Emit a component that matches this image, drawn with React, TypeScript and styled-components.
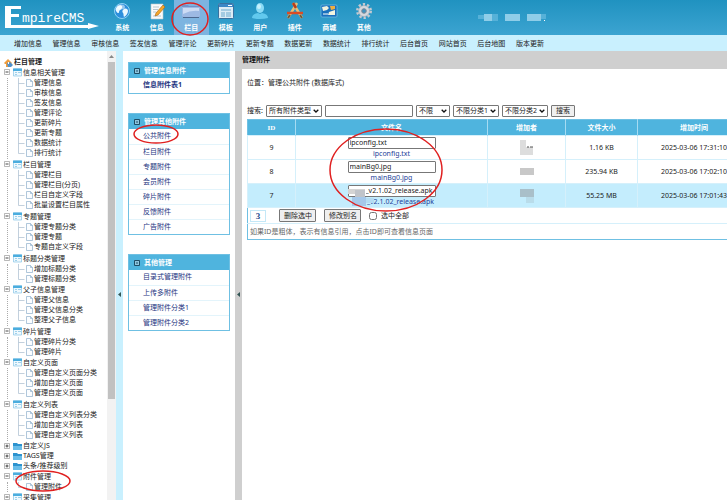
import React from "react";
import styled, { createGlobalStyle } from "styled-components";

const GlobalStyle = createGlobalStyle`
  *, *::before, *::after { box-sizing: border-box; }
  html, body, #root { height: 100%; margin: 0; }
  body {
    overflow: hidden;
    background: #fff;
    color: #222;
    font: 7px/10px "Noto Sans", "Noto Sans CJK SC", sans-serif;
  }
  ul { list-style: none; margin: 0; padding: 0; }
  a { color: inherit; text-decoration: none; }
  button, input, select { font: inherit; color: inherit; margin: 0; }
`;

const Page = styled.div`
  position: relative;
  display: flex;
  flex-direction: column;
  height: 100vh;
  overflow: hidden;
`;

/* ---------- header ---------- */

const Header = styled.header`
  display: flex;
  flex: none;
  height: 35px;
  background: linear-gradient(#2092c0, #3ca4d1);
`;

const LogoBox = styled.div`
  flex: none;
  width: 105px;
`;

const MainNav = styled.nav`
  display: flex;
  flex: none;
  width: 276px;
`;

const MainLink = styled.a<{ $active?: boolean }>`
  display: flex;
  flex: 1;
  flex-direction: column;
  align-items: center;
  gap: 3px;
  padding-top: 2px;
  color: #fff;
  font-weight: 700;
  background: ${(p) => (p.$active ? "#7db4e0" : "transparent")};
`;

const UserInfo = styled.div`
  padding: 13px 0 0 97px;
  svg { display: block; }
`;

const SubNav = styled.nav`
  flex: none;
  height: 16px;
  padding: 4px 14px 0;
  background: #c9f0fe;
`;

const SubList = styled.ul`
  display: flex;
  justify-content: space-between;
  max-width: 530px;
  white-space: nowrap;
`;

/* ---------- body columns ---------- */

const Body = styled.div`
  display: flex;
  flex: 1;
  min-height: 0;
`;

const TreePane = styled.aside`
  flex: none;
  width: 107px;
  overflow: hidden;
  padding-top: 6px;
  white-space: nowrap;
`;

const ScrollTrack = styled.div`
  display: flex;
  flex: none;
  flex-direction: column;
  align-items: center;
  width: 9px;
  background: #f2f2f2;
`;

const ScrollArrow = styled.svg`
  flex: none;
  width: 5px;
  height: 11px;
`;

const ScrollThumb = styled.div`
  width: 7px;
  height: 75%;
  background: #c1c1c1;
`;

const Splitter = styled.button<{ $tone: string }>`
  display: flex;
  flex: none;
  align-items: center;
  justify-content: center;
  width: 7px;
  padding: 38px 0 0;
  border: 0;
  background: ${(p) => p.$tone};
`;

/* ---------- tree ---------- */

const TreeTitle = styled.div`
  display: flex;
  align-items: center;
  gap: 1px;
  height: 10px;
  padding-left: 4px;
  font-weight: 700;
`;

const Folder = styled.div<{ $closed?: boolean }>`
  display: flex;
  align-items: center;
  height: ${(p) => (p.$closed ? 10 : 11)}px;
  padding-left: 4px;
`;

const Toggle = styled.button`
  display: flex;
  width: 7px;
  height: 7px;
  margin-right: 2px;
  padding: 0;
  border: 0;
  background: #fff;
`;

const Leaves = styled.ul<{ $long: boolean }>`
  margin-left: 7px;
  padding: 0 0 ${(p) => (p.$long ? 1 : 0)}px 10px;
  border-left: 1px dotted #aaa;
`;

const Leaf = styled.a`
  display: flex;
  align-items: center;
  height: 10px;
`;

/* ---------- side menu ---------- */

const MenuPane = styled.aside`
  display: flex;
  flex: none;
  flex-direction: column;
  gap: 19px;
  width: 112px;
  padding: 11px 5px 0;
`;

const MenuBox = styled.section`
  border: 1px solid #6fc0e3;
  color: #1c3380;
`;

const MenuTitle = styled.h2`
  display: flex;
  align-items: center;
  gap: 4px;
  height: 15px;
  margin: 0;
  padding-left: 5px;
  background: #4fb4de;
  color: #fff;
  font-size: 7px;
`;

const MenuItem = styled.a<{ $bold?: boolean }>`
  display: block;
  height: 15px;
  padding: 2px 0 0 14px;
  font-weight: ${(p) => (p.$bold ? 700 : 400)};
  li + li > & { border-top: 1px solid #e3f4fb; }
`;

/* ---------- content ---------- */

const Content = styled.main`
  flex: 1;
  min-width: 0;
  overflow: hidden;
`;

const ContentTitle = styled.h1`
  height: 18px;
  margin: 0;
  padding-top: 4px;
  background: #cfcfcf;
  font-size: 7px;
  color: #111;
`;

const ContentBody = styled.div`
  padding: 9px 0 0 5px;
  white-space: nowrap;
`;

const SearchForm = styled.form`
  display: flex;
  align-items: center;
  gap: 3px;
  height: 14px;
  margin: 16px 0 1px;
`;

const SelectWrap = styled.span<{ $w: number }>`
  position: relative;
  display: flex;
  width: ${(p) => p.$w}px;
  svg {
    position: absolute;
    right: 3px;
    top: 4px;
    pointer-events: none;
  }
`;

const Select = styled.select`
  appearance: none;
  width: 100%;
  height: 12px;
  padding: 0 0 0 2px;
  border: 1px solid #777;
  border-radius: 1px;
  background: #fff;
  line-height: 10px;
`;

const TextInput = styled.input<{ $masked?: boolean }>`
  width: 88px;
  height: 12px;
  padding: 0 0 0 ${(p) => (p.$masked ? 17 : 1)}px;
  border: 1px solid #777;
  border-radius: 1px;
  background: #fff;
`;

const Button = styled.button`
  height: 12px;
  padding: 0 4px;
  border: 1px solid #777;
  border-radius: 1px;
  background: #efefef;
  line-height: 10px;
`;

const Table = styled.table`
  width: 100%;
  min-width: 504px;
  table-layout: fixed;
  border-collapse: collapse;
  border: 1px solid #6fc0e3;
  text-align: center;
`;

const Th = styled.th<{ $w?: number }>`
  width: ${(p) => (p.$w ? `${p.$w}px` : "auto")};
  height: 16px;
  padding: 0;
  border-right: 1px solid #a5dbf2;
  background: #4fb4de;
  color: #fff;
  font-family: "Liberation Serif", "Noto Sans CJK SC", serif;
`;

const Row = styled.tr<{ $hot?: boolean }>`
  background: ${(p) => (p.$hot ? "#c4edfd" : "#fff")};
`;

const Td = styled.td`
  height: 24px;
  padding: 0;
  border: 1px solid #d5f0fb;
  svg { display: block; margin: 0 auto; }
`;

const FileCell = styled.div`
  position: relative;
  display: flex;
  flex-direction: column;
  align-items: center;
  width: 88px;
  height: 22px;
  margin: 0 auto;
`;

const FileLink = styled.a<{ $masked?: boolean }>`
  color: #1d4299;
  padding-left: ${(p) => (p.$masked ? 18 : 0)}px;
`;

const Mosaic = styled.svg`
  position: absolute;
  left: 0;
  top: 4px;
`;

const FootCell = styled.td`
  height: 16px;
  padding: 0 2px;
  border: 1px solid #d5f0fb;
  border-left-color: #6fc0e3;
  text-align: left;
  color: #666;
  tr:last-child > & { border-bottom-color: #6fc0e3; }
`;

const Actions = styled.div`
  display: flex;
  align-items: center;
  color: #222;
`;

const PageNumber = styled.b`
  width: 16px;
  height: 12px;
  margin-right: 13px;
  border: 1px solid #c4e8f7;
  color: #1c4a8c;
  font: 700 9px/10px "Liberation Serif", serif;
  text-align: center;
`;

const ActionButton = styled(Button)`
  width: 37px;
  height: 13px;
  margin-right: 8px;
`;

const CheckLabel = styled.label`
  display: flex;
  align-items: center;
  gap: 4px;
  input { width: 8px; height: 8px; }
`;

const Marks = styled.svg`
  position: absolute;
  left: 0;
  top: 0;
  pointer-events: none;
`;

/* ---------- drawings ---------- */

const Logo = () => (
  <svg width="105" height="35" viewBox="0 0 105 35">
    <path d="M5 6h16v3h-10v5h8v3h-8v8h77v-2l11 3-11 3v-1H5z" fill="#fff" />
    <text x="22" y="22" fill="#fff" fontFamily="Liberation Mono" fontSize="13">mpireCMS</text>
  </svg>
);

const navIcons: Record<string, React.ReactNode> = {
  系统: (
    <>
      <circle cx="9" cy="9" r="7.5" fill="#2d8fdc" stroke="#8ed2f5" />
      <path d="M5 4c3-2 5 0 4 2S6 8 6 10s-2 1-3-1 0-4 2-5zM11 7c2-1 4 0 4 2s-2 5-4 6c-1-2 0-3-1-4s-1-3 1-4z" fill="#e9f8ff" />
      <ellipse cx="8" cy="5" rx="4" ry="2.5" fill="#fff" opacity=".5" />
    </>
  ),
  信息: (
    <>
      <path d="M3 2h12v15H3z" fill="#fafafa" stroke="#bcc9cf" strokeWidth=".6" />
      <path d="M5 5h6M5 7.500h5M5 10h3M5 14h8" stroke="#a7b9c3" strokeWidth=".8" />
      <path d="M15 3l2 2-7 8-3 1 1-3z" fill="#f4a72a" stroke="#a86316" strokeWidth=".6" />
    </>
  ),
  栏目: (
    <>
      <path d="M0 4q0-1 1-1h5l1 1h10q1 0 1 1v10H0z" fill="#7291c9" />
      <path d="M0 5h18v9q0 1-1 1H1q-1 0-1-1z" fill="#9db9e3" />
      <path d="M1 6h16v3q-8-1-16 3z" fill="#cddcf4" />
      <path d="M1 15.500h16" stroke="#4d688f" />
    </>
  ),
  模板: (
    <>
      <rect x="1.500" y="1.500" width="15" height="15" rx="1" fill="#ddecf5" stroke="#39719f" />
      <path d="M2 2h14v3H2z" fill="#3c87c6" />
      <path d="M4 7h10v2H4zM4 10h4v5H4zM9 10h5v5H9z" fill="#a4cbe2" />
      <path d="M11 3.500h4" stroke="#fff" />
    </>
  ),
  用户: (
    <>
      <path d="M1 16q0-4 6-5l2 1 2-1q6 1 6 5-8 2-16 0z" fill="#62c9ee" />
      <ellipse cx="9" cy="6" rx="4" ry="5" fill="#8adbf6" />
      <ellipse cx="8" cy="4.500" rx="2" ry="2.500" fill="#c6f1fd" />
    </>
  ),
  插件: (
    <>
      <path d="M2 16L11 1M7 1l9 15" stroke="#e4c07a" strokeWidth="2.500" />
      <path d="M1 11h16" stroke="#d94c25" strokeWidth="2.500" />
      <path d="M7 1l3 5" stroke="#b93c1c" strokeWidth="2.500" />
      <path d="M2 16l2-3M14 13l2 3" stroke="#6d5a3f" strokeWidth="2" />
    </>
  ),
  商城: (
    <>
      <rect x="1" y="3" width="16" height="12" rx="1" fill="#1971bd" stroke="#86c7ec" strokeWidth=".6" />
      <path d="M2 5l5-1 2 2-2 2-4 1zM9 10l6-2v5H8z" fill="#f1f3df" />
      <path d="M10 4h5v3l-4 1z" fill="#efaf41" />
      <path d="M3 12h5" stroke="#fff" />
    </>
  ),
  其他: (
    <>
      <circle cx="9" cy="9" r="6.500" fill="none" stroke="#c3c9d1" strokeWidth="3" strokeDasharray="2.2 1.9" />
      <circle cx="9" cy="9" r="5.500" fill="#d4d8de" stroke="#9ba4b0" strokeWidth=".6" />
      <circle cx="9" cy="9" r="2.300" fill="#3f93bf" stroke="#7f8997" />
    </>
  ),
};

const NavIcon = ({ name }: { name: string }) => (
  <svg width="18" height="18" viewBox="0 0 18 18">{navIcons[name]}</svg>
);

const HomeIcon = () => (
  <svg width="9" height="9" viewBox="0 0 9 9">
    <path d="M0 5L4 1l4 4-1 1v3H2V6H1z" fill="#ee9c3e" />
    <path d="M3 5l3-1 3 3-2 2H4z" fill="#4f91cc" />
    <path d="M4 4h1v2H4z" fill="#fff" />
  </svg>
);

const ToggleIcon = ({ closed }: { closed?: boolean }) => (
  <svg width="7" height="7" viewBox="0 0 7 7">
    <path d="M.5.5h5v5h-5z" fill="#fff" stroke="#999" strokeWidth=".7" />
    <path d={closed ? "M1.500 3h3M3 1.500v3" : "M1.500 3h3"} stroke="#333" strokeWidth=".9" />
  </svg>
);

const FolderIcon = ({ closed }: { closed?: boolean }) => (
  <svg width="10" height="9" viewBox="0 0 10 9">
    {closed ? (
      <>
        <path d="M0 1h4l1 1h4v6H0z" fill="#2d93cf" />
        <path d="M0 4h9v4H0z" fill="#69bde9" />
      </>
    ) : (
      <>
        <path d="M.5 1h8v7h-8z" fill="#eff9fe" stroke="#86c4e6" strokeWidth=".7" />
        <path d="M0 .5h9v2.500H0z" fill="#4badde" />
        <path d="M2 4.500h2M5 4.500h3M2 6.500h2" stroke="#8cc7e6" strokeWidth=".8" />
      </>
    )}
  </svg>
);

const LeafIcon = ({ last }: { last: boolean }) => (
  <svg width="16" height="10" viewBox="0 0 16 10">
    <path d={last ? "M.5 0v5.500h6" : "M.5 0v10M.5 5.500h6"} fill="none" stroke="#b3c4d4" strokeWidth=".8" />
    <path d="M8.500 1.500h4l2 2v5h-6z" fill="#fbfdff" stroke="#8eafcb" strokeWidth=".7" />
    <path d="M12.500 1.500v2h2" fill="none" stroke="#8eafcb" strokeWidth=".7" />
  </svg>
);

const MenuMark = () => (
  <svg width="6" height="6" viewBox="0 0 6 6">
    <path d="M.5.5h5v5h-5z" fill="#8fc6df" stroke="#1d4c66" />
    <path d="M2 3h2" stroke="#1d4c66" />
  </svg>
);

const Chevron = () => (
  <svg width="6" height="4" viewBox="0 0 6 4">
    <path d="M.7.7L3 3 5.300.7" fill="none" stroke="#111" strokeWidth="1.300" />
  </svg>
);

const Caret = () => (
  <svg width="3" height="5" viewBox="0 0 3 5"><path d="M3 0v5L0 2.500z" fill="#355" /></svg>
);

const blurs = [
  <svg key="a" width="14" height="15"><path d="M0 0h6v7h7v8H0z" fill="#ddd" /><path d="M7 7h2M10 7h3" stroke="#555" /></svg>,
  <svg key="b" width="14" height="7"><path d="M0 0h14v7H0z" fill="#c8c8c8" /></svg>,
  <svg key="c" width="14" height="14"><path d="M0 0h14v8H0z" fill="#a9bfc9" /><path d="M6 8h8v6H6z" fill="#b9dcea" /></svg>,
];

/* ---------- data ---------- */

const subLinks = ["增加信息", "管理信息", "审核信息", "签发信息", "管理评论", "更新碎片", "更新专题", "数据更新", "数据统计", "排行统计", "后台首页", "网站首页", "后台地图", "版本更新"];

const tree: { name: string; items?: string[] }[] = [
  { name: "信息相关管理", items: ["管理信息", "审核信息", "签发信息", "管理评论", "更新碎片", "更新专题", "数据统计", "排行统计"] },
  { name: "栏目管理", items: ["管理栏目", "管理栏目(分页)", "栏目自定义字段", "批量设置栏目属性"] },
  { name: "专题管理", items: ["管理专题分类", "管理专题", "专题自定义字段"] },
  { name: "标题分类管理", items: ["增加标题分类", "管理标题分类"] },
  { name: "父子信息管理", items: ["管理父信息", "管理父信息分类", "整理父子信息"] },
  { name: "碎片管理", items: ["管理碎片分类", "管理碎片"] },
  { name: "自定义页面", items: ["管理自定义页面分类", "增加自定义页面", "管理自定义页面"] },
  { name: "自定义列表", items: ["管理自定义列表分类", "增加自定义列表", "管理自定义列表"] },
  { name: "自定义JS" },
  { name: "TAGS管理" },
  { name: "头条/推荐级别" },
  { name: "附件管理", items: ["管理附件"] },
  { name: "采集管理", items: [] },
];

const menus = [
  { title: "管理信息附件", items: ["信息附件表1"], bold: true },
  { title: "管理其他附件", items: ["公共附件", "栏目附件", "专题附件", "会员附件", "碎片附件", "反馈附件", "广告附件"] },
  { title: "其他管理", items: ["目录式管理附件", "上传多附件", "管理附件分类1", "管理附件分类2"] },
];

const files = [
  { id: 9, name: "ipconfig.txt", size: "1.16 KB", time: "2025-03-06 17:31:10" },
  { id: 8, name: "mainBg0.jpg", size: "235.94 KB", time: "2025-03-06 17:02:10" },
  { id: 7, name: "_v2.1.02_release.apk", size: "55.25 MB", time: "2025-03-06 17:01:43", masked: true },
];

const Picker = ({ label, w }: { label: string; w: number }) => (
  <SelectWrap $w={w}>
    <Select aria-label={label}><option>{label}</option></Select>
    <Chevron />
  </SelectWrap>
);

export default function App() {
  return (
    <Page>
      <GlobalStyle />
      <Header>
        <LogoBox><Logo /></LogoBox>
        <MainNav>
          {Object.keys(navIcons).map((n) => (
            <MainLink key={n} href="#" $active={n === "栏目"}><NavIcon name={n} />{n}</MainLink>
          ))}
        </MainNav>
        <UserInfo>
          <svg width="72" height="9" viewBox="0 0 72 9">
            <path d="M6 1h8v7H6zM27 1h15v7H27zM49 1h14v7H49z" fill="#8fcde8" />
            <path d="M14 1h6v7h-6zM0 2h6v4H0zM63 1h5v5h-5z" fill="#56b1d8" />
            <path d="M66 7h1v1h-1z" fill="#fff" />
          </svg>
        </UserInfo>
      </Header>
      <SubNav>
        <SubList>{subLinks.map((s) => <li key={s}><a href="#">{s}</a></li>)}</SubList>
      </SubNav>
      <Body>
        <TreePane>
          <TreeTitle><HomeIcon />栏目管理</TreeTitle>
          <ul>
            {tree.map((g) => (
              <li key={g.name}>
                <Folder $closed={!g.items}>
                  <Toggle aria-label={g.name}><ToggleIcon closed={!g.items} /></Toggle>
                  <FolderIcon closed={!g.items} />
                  <a href="#">{g.name}</a>
                </Folder>
                {g.items && (
                  <Leaves $long={g.items.length > 2}>
                    {g.items.map((t, i) => (
                      <li key={t}><Leaf href="#"><LeafIcon last={i === g.items!.length - 1} />{t}</Leaf></li>
                    ))}
                  </Leaves>
                )}
              </li>
            ))}
          </ul>
        </TreePane>
        <ScrollTrack>
          <ScrollArrow viewBox="0 0 5 11"><path d="M0 7l2.500-3L5 7z" fill="#888" /></ScrollArrow>
          <ScrollThumb />
        </ScrollTrack>
        <Splitter $tone="#c9f0fe" aria-label="收起目录"><Caret /></Splitter>
        <MenuPane>
          {menus.map((m) => (
            <MenuBox key={m.title}>
              <MenuTitle><MenuMark />{m.title}</MenuTitle>
              <ul>{m.items.map((t) => <li key={t}><MenuItem href="#" $bold={m.bold}>{t}</MenuItem></li>)}</ul>
            </MenuBox>
          ))}
        </MenuPane>
        <Splitter $tone="#cfcfcf" aria-label="收起菜单"><Caret /></Splitter>
        <Content>
          <ContentTitle>管理附件</ContentTitle>
          <ContentBody>
            <div>位置：管理公共附件 (数据库式)</div>
            <SearchForm>
              <label htmlFor="keyword">搜索:</label>
              <Picker label="所有附件类型" w={56} />
              <TextInput id="keyword" />
              <Picker label="不限" w={34} />
              <Picker label="不限分类1" w={46} />
              <Picker label="不限分类2" w={46} />
              <Button type="button">搜索</Button>
            </SearchForm>
            <Table>
              <thead>
                <tr>
                  <Th $w={48}>ID</Th>
                  <Th $w={192}>文件名</Th>
                  <Th $w={78}>增加者</Th>
                  <Th $w={72}>文件大小</Th>
                  <Th>增加时间</Th>
                </tr>
              </thead>
              <tbody>
                {files.map((f, i) => (
                  <Row key={f.id} $hot={f.masked}>
                    <Td>{f.id}</Td>
                    <Td>
                      <FileCell>
                        <TextInput aria-label={`文件名 ${f.id}`} defaultValue={f.name} $masked={f.masked} />
                        <FileLink href="#" $masked={f.masked}>{f.name}</FileLink>
                        {f.masked && (
                          <Mosaic width="29" height="18" viewBox="0 0 29 18">
                            <path d="M0 0h17v5H0z" fill="#d4d4d4" />
                            <path d="M7 1h10v7H7z" fill="#c0c4ca" />
                            <path d="M4 8h14v9H4z" fill="#a5c8ea" />
                            <path d="M18 9h8v5h-8z" fill="#b4dcf3" />
                          </Mosaic>
                        )}
                      </FileCell>
                    </Td>
                    <Td>{blurs[i]}</Td>
                    <Td>{f.size}</Td>
                    <Td>{f.time}</Td>
                  </Row>
                ))}
                <tr>
                  <FootCell colSpan={5}>
                    <Actions>
                      <PageNumber>3</PageNumber>
                      <ActionButton type="button">删除选中</ActionButton>
                      <ActionButton type="button">修改别名</ActionButton>
                      <CheckLabel><input type="checkbox" />选中全部</CheckLabel>
                    </Actions>
                  </FootCell>
                </tr>
                <tr>
                  <FootCell colSpan={5}>如果ID是粗体，表示有信息引用，点击ID即可查看信息页面</FootCell>
                </tr>
              </tbody>
            </Table>
          </ContentBody>
        </Content>
      </Body>
      <Marks width="727" height="500" viewBox="0 0 727 500" fill="none" stroke="#e02020" strokeWidth="1.500">
        <ellipse cx="190" cy="19" rx="18" ry="16" />
        <ellipse cx="156" cy="134" rx="22" ry="9" />
        <ellipse cx="386" cy="170" rx="56" ry="41" />
        <ellipse cx="43" cy="481" rx="27" ry="10" />
      </Marks>
    </Page>
  );
}
